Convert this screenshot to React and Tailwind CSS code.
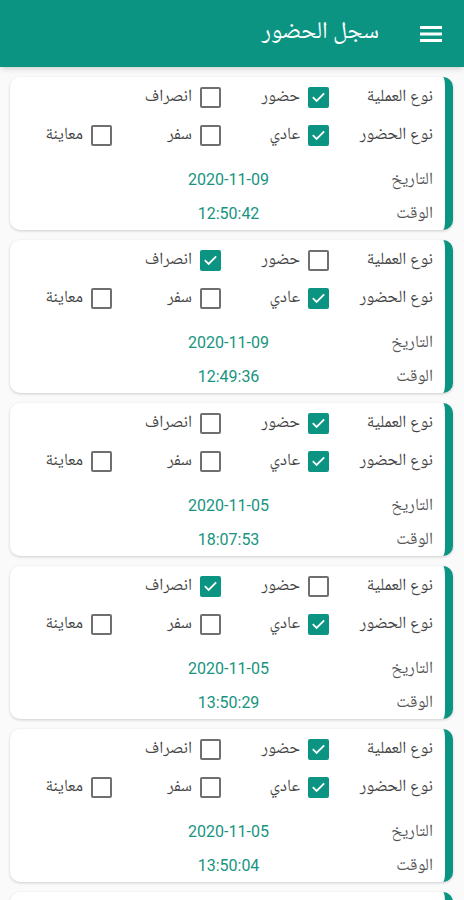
import React from "react";

const AR = { fontFamily: '"Noto Naskh Arabic", "Noto Sans Arabic", "DejaVu Sans", sans-serif' };
const NUM = { fontFamily: 'Roboto, "Liberation Sans", sans-serif' };

const records = [
  { op: "in", date: "2020-11-09", time: "12:50:42" },
  { op: "out", date: "2020-11-09", time: "12:49:36" },
  { op: "in", date: "2020-11-05", time: "18:07:53" },
  { op: "out", date: "2020-11-05", time: "13:50:29" },
  { op: "in", date: "2020-11-05", time: "13:50:04" },
  { op: "in", date: "2020-11-05", time: "13:49:51" },
];

function Box({ checked }) {
  if (checked) {
    return (
      <span className="w-[21px] h-[21px] rounded-[2px] bg-[#0b9482] flex items-center justify-center shrink-0">
        <svg width="15" height="15" viewBox="0 0 24 24" fill="none">
          <path d="M4 12.5l5 5L20 6.5" stroke="white" strokeWidth="3" strokeLinecap="square" />
        </svg>
      </span>
    );
  }
  return <span className="w-[21px] h-[21px] rounded-[2px] border-2 border-[#6f6f6f] bg-white shrink-0" />;
}

function Check({ checked, label }) {
  return (
    <div className="flex items-center gap-2">
      <Box checked={checked} />
      <span className="text-[17px] text-[#444] leading-none" style={AR}>{label}</span>
    </div>
  );
}

function Row({ className, children }) {
  return (
    <div className={"grid grid-cols-[104px_108px_109px_1fr] h-[22px] items-center " + className}>
      {children}
    </div>
  );
}

function Label({ children, dim }) {
  return (
    <div className={"text-[17px] leading-none " + (dim ? "text-[#555]" : "text-[#444]")} style={AR}>
      {children}
    </div>
  );
}

function Value({ children }) {
  return (
    <div className="col-span-2 pl-4 flex items-center justify-center text-[16px] text-[#17947f]" style={NUM}>
      {children}
    </div>
  );
}

function Card({ r }) {
  return (
    <div className="ml-[10px] mr-[11px] mb-[10px] bg-white rounded-[10px] border-r-[8px] border-[#0b9482] shadow-[0_1px_3px_rgba(0,0,0,0.18)]">
      <div dir="rtl" className="flex flex-col pr-[12px] pt-[9px] h-[153px]">
        <Row>
          <Label>نوع العملية</Label>
          <Check checked={r.op === "in"} label="حضور" />
          <Check checked={r.op === "out"} label="انصراف" />
          <div />
        </Row>
        <Row className="mt-4">
          <Label>نوع الحضور</Label>
          <Check checked label="عادي" />
          <Check checked={false} label="سفر" />
          <Check checked={false} label="معاينة" />
        </Row>
        <Row className="mt-[22px]">
          <Label dim>التاريخ</Label>
          <Value>{r.date}</Value>
          <div />
        </Row>
        <Row className="mt-3">
          <Label dim>الوقت</Label>
          <Value>{r.time}</Value>
          <div />
        </Row>
      </div>
    </div>
  );
}

export default function App() {
  return (
    <div className="w-[464px] h-[900px] overflow-hidden bg-[#fafafa]">
      <div className="h-[67px] bg-[#0b9482] flex items-center justify-end pr-[22px] shadow-md relative z-10">
        <span className="text-white text-[24px] mr-[41px] -mt-[2px]" style={AR}>سجل الحضور</span>
        <svg width="22" height="18" viewBox="0 0 22 18">
          <rect x="0" y="1" width="22" height="3" fill="white" />
          <rect x="0" y="7.5" width="22" height="3" fill="white" />
          <rect x="0" y="14" width="22" height="3" fill="white" />
        </svg>
      </div>
      <div className="pt-[10px]">
        {records.map((r, i) => (
          <Card key={i} r={r} />
        ))}
      </div>
    </div>
  );
}
